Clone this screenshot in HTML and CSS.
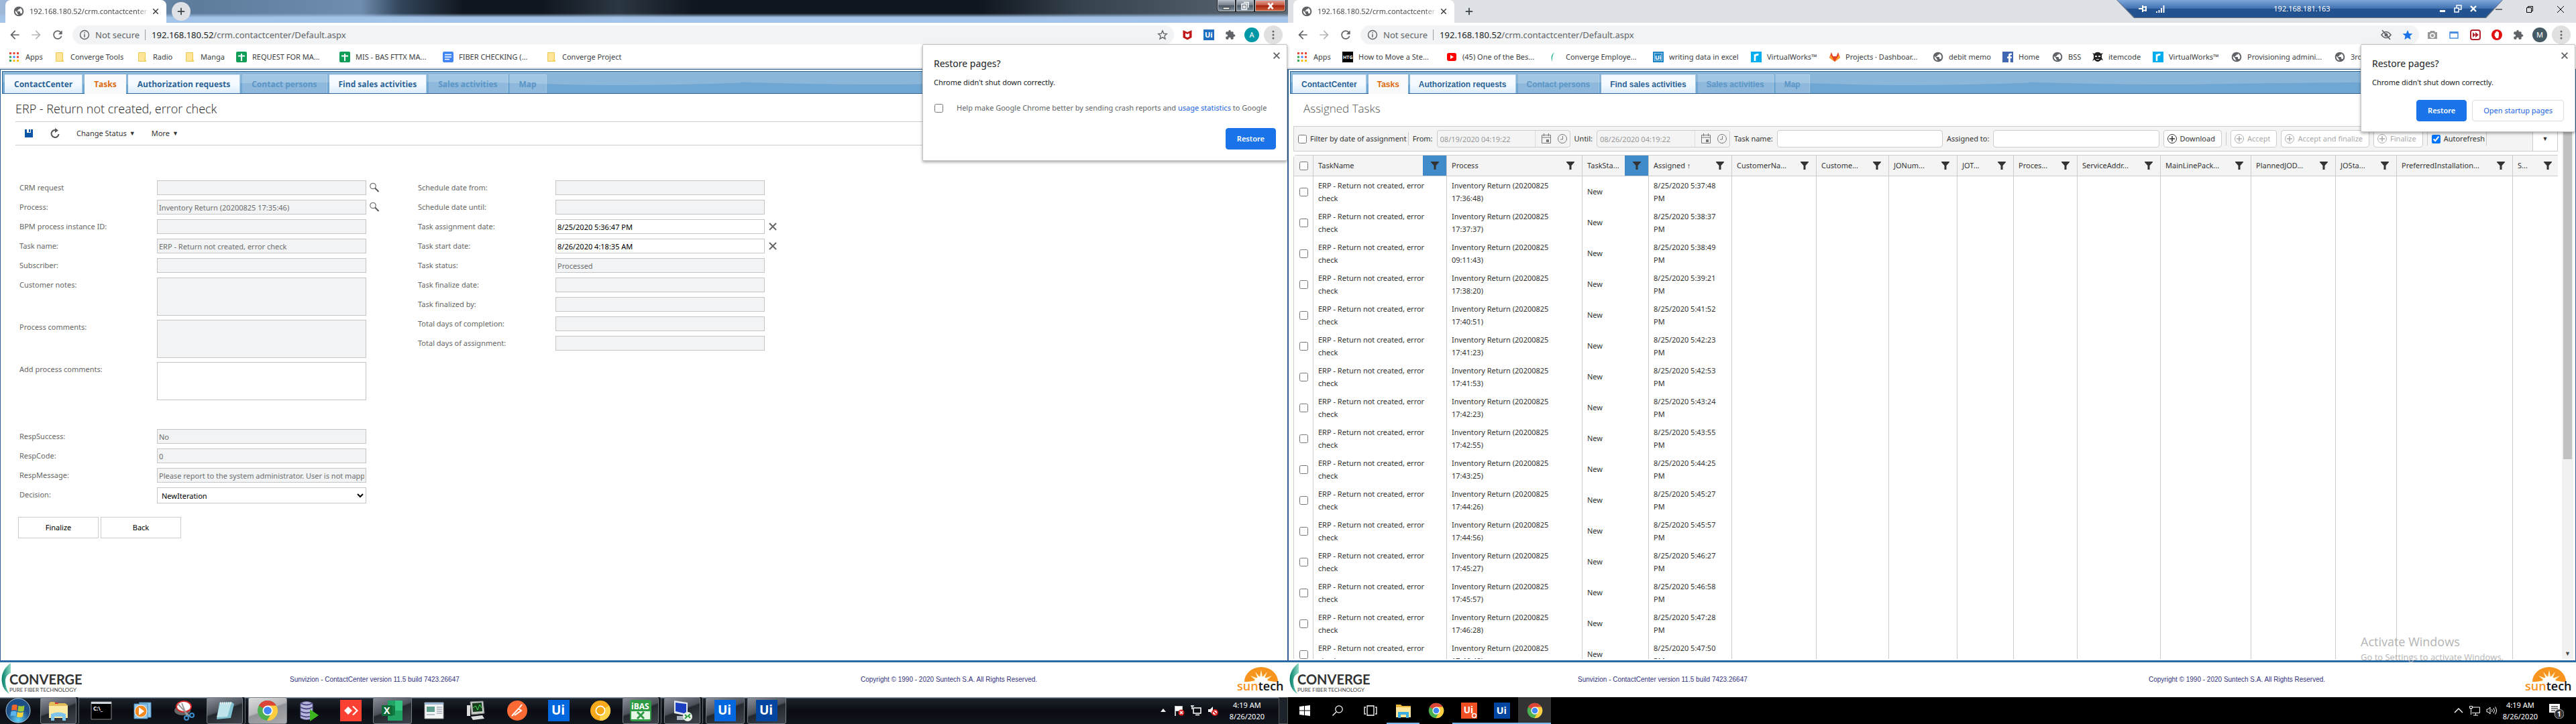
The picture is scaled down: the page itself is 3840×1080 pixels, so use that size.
FILE: index.html
```html
<!DOCTYPE html>
<html lang="en">
<head>
<meta charset="utf-8">
<title>ContactCenter</title>
<link rel="stylesheet" href="styles.css">
</head>
<body>
<svg class="defs" aria-hidden="true">
  <symbol id="globe" viewBox="0 0 24 24"><path fill="#5f6368" d="M12 1a11 11 0 1 0 0 22 11 11 0 0 0 0-22zM4 12c0-.6.1-1.200.2-1.800L9 15v1c0 1.100.9 2 2 2v1.900C7 19.400 4 16.100 4 12zm13.900 5.400c-.3-.8-1-1.400-1.900-1.400h-1v-3c0-.6-.4-1-1-1H8v-2h2c.6 0 1-.4 1-1V7h2c1.100 0 2-.9 2-2v-.4c2.900 1.200 5 4.100 5 7.400 0 2.100-.8 4-2.100 5.400z"/></symbol>
  <symbol id="close" viewBox="0 0 16 16"><path d="M3 3l10 10M13 3L3 13" stroke="currentColor" stroke-width="2" fill="none"/></symbol>
  <symbol id="plus" viewBox="0 0 16 16"><path d="M8 2v12M2 8h12" stroke="currentColor" stroke-width="2" fill="none"/></symbol>
  <symbol id="back" viewBox="0 0 24 24"><path fill="currentColor" d="M20 11H7.830l5.590-5.590L12 4l-8 8 8 8 1.410-1.410L7.830 13H20z"/></symbol>
  <symbol id="forward" viewBox="0 0 24 24"><path fill="currentColor" d="M4 11h12.170l-5.590-5.590L12 4l8 8-8 8-1.410-1.410L16.170 13H4z"/></symbol>
  <symbol id="reload" viewBox="0 0 24 24"><path fill="currentColor" d="M17.650 6.350C16.200 4.900 14.210 4 12 4c-4.420 0-7.990 3.580-7.990 8s3.570 8 7.990 8c3.730 0 6.840-2.550 7.730-6h-2.080c-.82 2.330-3.040 4-5.650 4-3.310 0-6-2.690-6-6s2.690-6 6-6c1.660 0 3.140.69 4.220 1.780L13 11h7V4z"/></symbol>
  <symbol id="info" viewBox="0 0 16 16"><circle cx="8" cy="8" r="6.500" fill="none" stroke="#5f6368" stroke-width="1.400"/><path d="M8 7v4.500M8 4.200v1.600" stroke="#5f6368" stroke-width="1.500"/></symbol>
  <symbol id="puzzle" viewBox="0 0 24 24"><path fill="#5f6368" d="M20.500 11H19V7c0-1.100-.9-2-2-2h-4V3.500a2.500 2.500 0 0 0-5 0V5H4c-1.100 0-2 .9-2 2v3.800h1.500a2.700 2.700 0 0 1 0 5.400H2V20c0 1.100.9 2 2 2h3.800v-1.500a2.700 2.700 0 0 1 5.400 0V22H17c1.100 0 2-.9 2-2v-4h1.500a2.500 2.500 0 0 0 0-5z"/></symbol>
  <symbol id="dots" viewBox="0 0 16 16"><g fill="#5f6368"><circle cx="8" cy="3" r="1.500"/><circle cx="8" cy="8" r="1.500"/><circle cx="8" cy="13" r="1.500"/></g></symbol>
  <symbol id="apps" viewBox="0 0 14 14"><path fill="#ea4335" d="M0 0h3v3H0zM5.500 0h3v3h-3zM11 0h3v3h-3z"/><path fill="#34a853" d="M0 5.500h3v3H0zM0 11h3v3H0z"/><path fill="#4285f4" d="M5.500 5.500h3v3h-3z"/><path fill="#ea4335" d="M11 5.500h3v3h-3z"/><path fill="#fbbc04" d="M5.500 11h3v3h-3zM11 11h3v3h-3z"/></symbol>
  <symbol id="folder" viewBox="0 0 16 16"><path fill="#ffe599" stroke="#ecc94f" d="M2.500 1.500h10V13h1v1.500h-11z"/><path fill="#f7d25c" d="M11 10h2v4h-2z"/></symbol>
  <symbol id="sheet" viewBox="0 0 16 16"><rect width="16" height="16" rx="2" fill="#0f9d58"/><path d="M8 3v11M3 6.500h10" stroke="#fff" stroke-width="2"/></symbol>
  <symbol id="doc" viewBox="0 0 16 16"><rect width="16" height="16" rx="2" fill="#4285f4"/><path d="M3 4.500h10M3 8h10M3 11.500h7" stroke="#fff" stroke-width="1.600"/></symbol>
  <symbol id="rworks" viewBox="0 0 16 16"><path fill="#00aeef" d="M0 0h16v16H0z"/><path d="M6 14V4M6 7c1-2.500 3-3 5.500-2.500" fill="none" stroke="#fff" stroke-width="2.600"/></symbol>
  <symbol id="funnel" viewBox="0 0 14 14"><path fill="#333" d="M1 1h12v1L8.500 7v6h-3V7L1 2z"/></symbol>
  <symbol id="calendar" viewBox="0 0 16 16"><path fill="none" stroke="#777" d="M1.500 2.500h13v12h-13zM1.500 6h13M4.500 0v4M11.500 0v4"/><path fill="#777" d="M8 9h4v4H8z"/></symbol>
  <symbol id="clock" viewBox="0 0 16 16"><circle cx="8" cy="8" r="6.500" fill="none" stroke="#777"/><path d="M8.500 4v5H5" fill="none" stroke="#777"/></symbol>
  <symbol id="addc" viewBox="0 0 16 16"><circle cx="8" cy="8" r="6.500" fill="none" stroke="currentColor"/><path d="M8 4v8M4 8h8" stroke="currentColor" stroke-width="1.600"/></symbol>
  <symbol id="lens" viewBox="0 0 16 16"><circle cx="6" cy="5.500" r="4.200" fill="#fff" stroke="#777" stroke-width="1.300"/><path d="M9 8.500l5.500 5.500" stroke="#555" stroke-width="2"/></symbol>
  <symbol id="chrome" viewBox="0 0 32 32"><circle cx="16" cy="16" r="15" fill="#4caf50"/><path d="M16 16L3 8.500A15 15 0 0 1 29 8.500z" fill="#db4437"/><path d="M3 8.500A15 15 0 0 1 16 1v15z" fill="#db4437"/><path d="M29 8.500A15 15 0 0 1 15 31l7-12-6-10.500z" fill="#ffcd40"/><circle cx="16" cy="16" r="7.500" fill="#fff"/><circle cx="16" cy="16" r="5.800" fill="#4285f4"/></symbol>
  <symbol id="converge" viewBox="0 0 128 50"><defs><linearGradient id="leaf" x2="1"><stop offset="0" stop-color="#00806a"/><stop offset="1" stop-color="#8fd9c4"/></linearGradient></defs><path fill="url(#leaf)" d="M16 0C6 7 1 18 3 29c1 8 5 13 11 17-4-6-6-12-6-19 0-6 3-10 8-12z"/><text x="14" y="32" font-family="Lato, sans-serif" font-size="20" font-weight="700" fill="#333">CONVERGE</text><text x="14" y="43" font-family="Lato, sans-serif" font-size="8" fill="#444">PURE FIBER TECHNOLOGY</text></symbol>
  <symbol id="suntech" viewBox="0 0 74 40"><path fill="#f7941e" d="M12 23a25 22 0 0 1 50 0z"/><path fill="#fff8d8" d="M37 5l2 11 7-8-4 10 11-4-8 7 12 2H17l12-2-8-7 11 4-4-10 7 8z"/><path d="M27 23a10 8 0 0 1 20 0z" fill="#fff"/><text x="1" y="36" font-family="Open Sans, sans-serif" font-weight="600" font-size="18" fill="#f7941e">sun<tspan fill="#111">tech</tspan></text></symbol>
</svg>

<section class="window seven">
  <header class="tabstrip glass">
    <div class="tab"><svg class="i16"><use href="#globe"/></svg><span class="tabname">192.168.180.52/crm.contactcenter</span><button class="plain" aria-label="Close tab"><svg class="i12"><use href="#close"/></svg></button></div>
    <button class="newtab round" aria-label="New tab"><svg class="i14"><use href="#plus"/></svg></button>
    <div class="aero"><button aria-label="Minimize"><svg class="i14" viewBox="0 0 14 14"><path d="M2 9h10v3H2z" fill="#fff" stroke="#333"/></svg></button><button aria-label="Restore"><svg class="i14" viewBox="0 0 14 14"><path d="M5 1.500h7v8M2 4h7.500v8H2zM4.500 7h2.500v2.500H4.500z" fill="none" stroke="#fff" stroke-width="1.500"/></svg></button><button class="red" aria-label="Close"><svg class="i14" viewBox="0 0 16 16"><path d="M4 3l8 10M12 3L4 13" stroke="#fff" stroke-width="3"/></svg></button></div>
  </header>
  <div class="toolbar">
    <button class="plain" aria-label="Back"><svg class="i20"><use href="#back"/></svg></button><button class="plain dim" aria-label="Forward"><svg class="i20"><use href="#forward"/></svg></button><button class="plain" aria-label="Reload"><svg class="i20"><use href="#reload"/></svg></button>
    <div class="omnibox"><svg class="i16"><use href="#info"/></svg><span class="secure">Not secure</span><span class="url" role="textbox"><b>192.168.180.52</b>/crm.contactcenter/Default.aspx</span><button class="plain" aria-label="Bookmark"><svg class="i16" viewBox="0 0 16 16"><path d="M8 1.800l1.800 4.300 4.700.4-3.600 3 1.100 4.600L8 11.600l-4 2.500 1.100-4.600-3.600-3 4.700-.4z" fill="none" stroke="#5f6368" stroke-width="1.300"/></svg></button></div>
    <div class="exts">
      <svg class="i16" viewBox="0 0 16 16"><path fill="#c01818" d="M1.500 1L8 4l6.500-3v11L8 15.500 1.500 12zM5 5.500v5L8 12l3-1.500v-5L8 7z"/></svg>
      <svg class="i16" viewBox="0 0 16 16"><path fill="#1f6fc0" d="M0 0h16v16H0z"/><text x="2" y="12" class="svgt" font-size="11">Ui</text></svg>
      <svg class="i16"><use href="#puzzle"/></svg>
      <span class="avatar teal">A</span>
      <button class="menu" aria-label="Menu"><svg class="i16"><use href="#dots"/></svg></button>
    </div>
  </div>
  <nav class="bookmarks left">
    <a href="#"><svg class="i14"><use href="#apps"/></svg>Apps</a>
    <a href="#"><svg class="i16"><use href="#folder"/></svg>Converge Tools</a>
    <a href="#"><svg class="i16"><use href="#folder"/></svg>Radio</a>
    <a href="#"><svg class="i16"><use href="#folder"/></svg>Manga</a>
    <a href="#"><svg class="i16"><use href="#sheet"/></svg>REQUEST FOR MA...</a>
    <a href="#"><svg class="i16"><use href="#sheet"/></svg>MIS - BAS FTTX MA...</a>
    <a href="#"><svg class="i16"><use href="#doc"/></svg>FIBER CHECKING (...</a>
    <a href="#"><svg class="i16"><use href="#folder"/></svg>Converge Project</a>
  </nav>
  <main class="page">
    <nav class="apptabs"><a href="#">ContactCenter</a><a href="#" class="on">Tasks</a><a href="#">Authorization requests</a><a class="off">Contact persons</a><a href="#">Find sales activities</a><a class="off">Sales activities</a><a class="off">Map</a></nav>
    <h1>ERP - Return not created, error check</h1>
    <div class="actions">
      <button class="plain" aria-label="Save"><svg class="i14" viewBox="0 0 14 14"><path fill="#0b56a4" d="M1 1h12v12H1z"/><path fill="#fff" d="M4 1h6v5H4z"/><path fill="#0b56a4" d="M7 1h2v4H7z"/></svg></button>
      <button class="plain" aria-label="Refresh"><svg class="i16" viewBox="0 0 16 16"><path d="M10 3.300A5.500 5.500 0 1 0 13.500 9" fill="none" stroke="#555" stroke-width="2"/><path d="M8 0l5 3.500L8 7z" fill="#555"/></svg></button>
      <button class="plain">Change Status <i>▼</i></button><button class="plain">More <i>▼</i></button>
    </div>
    <form class="form">
      <div class="col">
        <div class="row"><label for="f1">CRM request</label><input id="f1" disabled><svg class="i16"><use href="#lens"/></svg></div>
        <div class="row"><label for="f2">Process:</label><input id="f2" disabled value="Inventory Return (20200825 17:35:46)"><svg class="i16"><use href="#lens"/></svg></div>
        <div class="row"><label for="f3">BPM process instance ID:</label><input id="f3" disabled></div>
        <div class="row"><label for="f4">Task name:</label><input id="f4" disabled value="ERP - Return not created, error check"></div>
        <div class="row"><label for="f5">Subscriber:</label><input id="f5" disabled></div>
        <div class="row"><label for="f6">Customer notes:</label><textarea id="f6" disabled></textarea></div>
        <div class="row"><label for="f7">Process comments:</label><textarea id="f7" disabled></textarea></div>
        <div class="row"><label for="f8">Add process comments:</label><textarea id="f8"></textarea></div>
        <div class="row spaced"><label for="f9">RespSuccess:</label><input id="f9" disabled value="No"></div>
        <div class="row"><label for="f10">RespCode:</label><input id="f10" disabled value="0"></div>
        <div class="row"><label for="f11">RespMessage:</label><input id="f11" disabled value="Please report to the system administrator. User is not mapped"></div>
        <div class="row"><label for="f12">Decision:</label><select id="f12"><option>NewIteration</option></select></div>
        <div class="buttons"><button type="button">Finalize</button><button type="button">Back</button></div>
      </div>
      <div class="col">
        <div class="row"><label for="g1">Schedule date from:</label><input id="g1" disabled></div>
        <div class="row"><label for="g2">Schedule date until:</label><input id="g2" disabled></div>
        <div class="row"><label for="g3">Task assignment date:</label><input id="g3" value="8/25/2020 5:36:47 PM"><svg class="i16 gray"><use href="#close"/></svg></div>
        <div class="row"><label for="g4">Task start date:</label><input id="g4" value="8/26/2020 4:18:35 AM"><svg class="i16 gray"><use href="#close"/></svg></div>
        <div class="row"><label for="g5">Task status:</label><input id="g5" disabled value="Processed"></div>
        <div class="row"><label for="g6">Task finalize date:</label><input id="g6" disabled></div>
        <div class="row"><label for="g7">Task finalized by:</label><input id="g7" disabled></div>
        <div class="row"><label for="g8">Total days of completion:</label><input id="g8" disabled></div>
        <div class="row"><label for="g9">Total days of assignment:</label><input id="g9" disabled></div>
      </div>
    </form>
  </main>
  <footer class="foot"><svg class="conv"><use href="#converge"/></svg><span>Sunvizion - ContactCenter version 11.5 build 7423.26647</span><span>Copyright © 1990 - 2020 Suntech S.A. All Rights Reserved.</span><svg class="sun"><use href="#suntech"/></svg></footer>
  <div class="taskbar t7">
    <button class="orb" aria-label="Start"><svg class="i38" viewBox="0 0 38 38"><defs><radialGradient id="orb" cy=".9"><stop offset="0" stop-color="#5fd0f5"/><stop offset="1" stop-color="#1d4f86"/></radialGradient></defs><circle cx="19" cy="19" r="18" fill="url(#orb)" stroke="#a8c8e0"/><path fill="#f0662c" d="M10 11q4-2 8 0l-1 8q-4-2-8 0z"/><path fill="#9cc83c" d="M19.500 11.500q4 2 9 0l-1 8q-4 2-9 0z"/><path fill="#5bb4ec" d="M8.500 20.500q4-2 8 0l-1 7q-4-2-8 0z"/><path fill="#fcd23c" d="M18 21q4 2 9 0l-1 7q-4 2-9 0z"/></svg></button>
    <button class="lit stack" aria-label="Explorer"><svg class="i32" viewBox="0 0 32 32"><path fill="#e3bd5a" d="M2 6l2-3h6l2 2h14l4 3v19H2z"/><path fill="#fbe9a4" d="M2 9h28v18H2z"/><path fill="#d33" d="M11 4h5v2h-5z"/><path fill="#7fc4ea" d="M5 21q11-5 22 0v10h-5v-6H10v6H5z"/></svg></button>
    <button aria-label="Command prompt"><svg class="i32" viewBox="0 0 32 32"><path fill="#000" stroke="#888" d="M1 3h30v26H1z"/><path fill="#cfd6de" d="M1 3h30v3H1z"/><text x="4" y="16" class="svgt" font-size="8">C:\_</text></svg></button>
    <button aria-label="Media player"><svg class="i32" viewBox="0 0 32 32"><path fill="#8dc6ea" stroke="#4a8bb8" d="M3 6h20v22H3zM10 4h18v22h-5"/><circle cx="13" cy="17" r="9" fill="#f28a22" stroke="#fff"/><path fill="#fff" d="M10 11l8 6-8 6z"/></svg></button>
    <button aria-label="Snipping tool"><svg class="i32" viewBox="0 0 32 32"><ellipse cx="13" cy="16" rx="12" ry="7" fill="#666"/><ellipse cx="15" cy="10" rx="11" ry="8" fill="#fff" stroke="#d42a2a" stroke-width="2"/><path d="M6 6l18 19M12 5l8 20" stroke="#999" stroke-width="2"/><g fill="none" stroke="#3a8fd0" stroke-width="2"><circle cx="19" cy="27" r="3"/><circle cx="27" cy="23" r="3"/></g></svg></button>
    <button class="lit stack" aria-label="Notepad"><svg class="i32" viewBox="0 0 32 32"><path fill="#7fc0d0" d="M8 4l18-1 4 3-5 21-21 2z"/><path fill="#bfe4ec" d="M9 6l17-1-6 20-16 1z"/><path d="M9 5h18" stroke="#eee" stroke-width="3" stroke-dasharray="2 1"/></svg></button>
    <button class="lit bright" aria-label="Chrome"><svg class="i32"><use href="#chrome"/></svg></button>
    <button aria-label="Database"><svg class="i32" viewBox="0 0 32 32"><path fill="#b9b7dd" stroke="#6b68a0" d="M3 5q9-5 18 0v22q-9 5-18 0z"/><path d="M3 11q9 5 18 0M3 17q9 5 18 0M3 23q9 5 18 0M3 5q9 5 18 0" fill="none" stroke="#4a4780" stroke-width="2"/><path fill="#3cb521" d="M17 14l13 9-13 9z"/></svg></button>
    <button aria-label="AnyDesk"><svg class="i32" viewBox="0 0 32 32"><path fill="#fb4034" d="M0 0h32v32H0z"/><path fill="#fff" d="M12 10l6 6-6 6-6-6zM18 10l2-1 7 7-7 7-2-1 6-6z"/></svg></button>
    <button class="lit" aria-label="Excel"><svg class="i32" viewBox="0 0 32 32"><path fill="#21a366" d="M9 1h22v30H9z"/><path fill="#33c481" d="M20 1h11v15H20z"/><path fill="#107c41" d="M9 9h11v14H9z"/><path fill="#0f6b38" d="M0 8h16v16H0z"/><text x="3" y="21" class="svgt" font-size="14">X</text></svg></button>
    <button aria-label="Program"><svg class="i32" viewBox="0 0 32 32"><path fill="#f4f4f4" stroke="#999" d="M2 4h28v24H2z"/><path fill="#9db8d6" d="M2 4h28v3H2z"/><path fill="#5f9e8f" d="M5 10h12v8H5z"/><path d="M20 11h8M20 14h8M20 17h8M5 22h12M20 20h8" stroke="#7a8aa0"/></svg></button>
    <button aria-label="Monitor"><svg class="i32" viewBox="0 0 32 32"><path fill="#c7ccc7" stroke="#888" d="M8 3l19-1 2 18-19 2z"/><path fill="#173c1b" d="M11 5l14-1 1 13-14 1z"/><path d="M12 12l4-3 3 6 3-8 3 5" fill="none" stroke="#3fe054"/><path fill="#ddd" d="M9 25l17-2 3 5-17 2zM3 8h5v16H3z"/></svg></button>
    <button aria-label="Postman"><svg class="i32" viewBox="0 0 32 32"><circle cx="16" cy="16" r="15" fill="#fb6a35"/><path d="M8 24l10-11 4 3-10 7M19 12l4-5" fill="none" stroke="#fff" stroke-width="2"/></svg></button>
    <button aria-label="UiPath"><svg class="i32" viewBox="0 0 32 32"><path fill="#0067df" d="M0 0h32v32H0z"/><text x="5" y="22" class="svgt" font-size="19">Ui</text></svg></button>
    <button aria-label="Chrome Canary"><svg class="i32" viewBox="0 0 32 32"><circle cx="16" cy="16" r="15" fill="#f7a81b"/><path d="M16 16L29 8.500A15 15 0 0 1 15 31z" fill="#fdd248"/><circle cx="16" cy="16" r="7.500" fill="#fff"/><circle cx="16" cy="16" r="5.800" fill="#f3a712"/></svg></button>
    <button class="lit stack" aria-label="iBAS"><svg class="i32" viewBox="0 0 32 32"><rect width="32" height="32" rx="4" fill="#2f9a44"/><path fill="#e6f5e4" d="M2 17h28v12H2z"/><path d="M11 18l10 10M21 18L11 28" stroke="#2f9a44" stroke-width="3"/><text x="2" y="14" class="svgt" font-size="12">iBAS</text></svg></button>
    <button class="lit stack" aria-label="Remote desktop"><svg class="i32" viewBox="0 0 32 32"><path fill="#dfe6ee" d="M4 1l20 3v20L4 20z"/><path fill="#1c3fc0" d="M6 4l16 2v15L6 17z"/><path fill="#aab4be" d="M8 24h10v6H8z"/><circle cx="24" cy="25" r="7" fill="#e8f0e8"/><path d="M20 22l3 3-3 3M28 21l-3 3 3 3" fill="none" stroke="#2c9b3a" stroke-width="2"/></svg></button>
    <button class="lit" aria-label="UiPath Studio"><svg class="i32" viewBox="0 0 32 32"><path fill="#0067df" d="M0 0h32v32H0z"/><text x="5" y="22" class="svgt" font-size="19">Ui</text></svg></button>
    <button class="lit" aria-label="UiPath Assistant"><svg class="i32" viewBox="0 0 32 32"><path fill="#0046a0" d="M0 0h32v32H0z"/><text x="5" y="22" class="svgt" font-size="19">Ui</text></svg></button>
    <div class="tray">
      <svg class="i14" viewBox="0 0 14 14"><path fill="#eee" d="M3 9l4-5 4 5z"/></svg>
      <svg class="i16" viewBox="0 0 16 16"><path d="M2 1v15M2 2h10v6H2" stroke="#fff" fill="#fff" stroke-width="1.500"/><circle cx="11" cy="11" r="4.500" fill="#d42020"/><path d="M9 9l4 4M13 9l-4 4" stroke="#fff" stroke-width="1.500"/></svg>
      <svg class="i16" viewBox="0 0 16 16"><path d="M4 4h11v8H4zM7 14.500h6M2 1v5M0 1h5" stroke="#fff" fill="none" stroke-width="1.500"/></svg>
      <svg class="i16" viewBox="0 0 16 16"><path fill="#fff" d="M1 6h3l4-4v12l-4-4H1z"/><circle cx="11" cy="11" r="4" fill="#fff" stroke="#d42020" stroke-width="2"/><path d="M8 8l6 6" stroke="#d42020" stroke-width="2"/></svg>
      <div class="time">4:19 AM<br>8/26/2020</div><button class="peek" aria-label="Show desktop"></button>
    </div>
  </div>
  <aside class="dialog wide">
    <button class="plain x" aria-label="Close"><svg class="i14"><use href="#close"/></svg></button>
    <h2>Restore pages?</h2><p>Chrome didn't shut down correctly.</p>
    <label class="help"><input type="checkbox"><span>Help make Google Chrome better by sending crash reports and <a href="#">usage statistics</a> to Google</span></label>
    <div class="dbtns"><button class="primary">Restore</button></div>
  </aside>
</section>

<section class="window ten">
  <header class="tabstrip">
    <div class="tab"><svg class="i16"><use href="#globe"/></svg><span class="tabname">192.168.180.52/crm.contactcenter</span><button class="plain" aria-label="Close tab"><svg class="i12"><use href="#close"/></svg></button></div>
    <button class="newtab" aria-label="New tab"><svg class="i14"><use href="#plus"/></svg></button>
    <div class="winbtns"><button class="plain" aria-label="Minimize"><svg class="i12" viewBox="0 0 12 12"><path d="M1 6h10" stroke="#000"/></svg></button><button class="plain" aria-label="Restore"><svg class="i12" viewBox="0 0 12 12"><path d="M1.500 3.500h7v7h-7zM3.500 3V1.500h7v7H9" fill="none" stroke="#000"/></svg></button><button class="plain" aria-label="Close"><svg class="i12" viewBox="0 0 12 12"><path d="M1 1l10 10M11 1L1 11" stroke="#000"/></svg></button></div>
  </header>
  <div class="toolbar">
    <button class="plain" aria-label="Back"><svg class="i20"><use href="#back"/></svg></button><button class="plain dim" aria-label="Forward"><svg class="i20"><use href="#forward"/></svg></button><button class="plain" aria-label="Reload"><svg class="i20"><use href="#reload"/></svg></button>
    <div class="omnibox"><svg class="i16"><use href="#info"/></svg><span class="secure">Not secure</span><span class="url" role="textbox"><b>192.168.180.52</b>/crm.contactcenter/Default.aspx</span><svg class="i16" viewBox="0 0 16 16"><path d="M1 8q7-9 14 0-7 9-14 0zM2 1l12 14" fill="none" stroke="#5f6368" stroke-width="1.600"/><circle cx="8" cy="8" r="2.500" fill="#5f6368"/></svg><button class="plain" aria-label="Bookmark"><svg class="i16" viewBox="0 0 16 16"><path d="M8 1l2.100 4.900 5.400.4-4.100 3.500 1.300 5.200L8 12.200 3.300 15l1.300-5.200L.5 6.300l5.400-.4z" fill="#1a73e8"/></svg></button></div>
    <div class="exts">
      <svg class="i16" viewBox="0 0 16 16"><path fill="#999" d="M1 4h3l1-2h6l1 2h3v10H1z"/><circle cx="8" cy="9" r="3" fill="#999" stroke="#fff" stroke-width="1.500"/></svg>
      <svg class="i16" viewBox="0 0 16 16"><path d="M2 4h12v9H2z" fill="#fff" stroke="#4a8de0" stroke-width="1.500"/><path fill="#4a8de0" d="M2 3h12v3H2z"/></svg>
      <svg class="i16" viewBox="0 0 16 16"><rect x="1" y="1" width="14" height="14" rx="3" fill="#fff" stroke="#b3202a" stroke-width="2"/><path fill="#b3202a" d="M4 4l4 4-4 4zM8 4l5 4-5 4z"/></svg>
      <svg class="i16" viewBox="0 0 16 16"><circle cx="8" cy="8" r="8" fill="#e01010"/><path fill="#fff" d="M5 5h1.500V3H8V2.500h1.500V4H11v5l-1 4H7L4.500 9z"/></svg>
      <svg class="i16"><use href="#puzzle"/></svg>
      <span class="avatar slate">M</span>
      <button class="menu" aria-label="Menu"><svg class="i16"><use href="#dots"/></svg></button>
    </div>
  </div>
  <nav class="bookmarks right">
    <a href="#"><svg class="i14"><use href="#apps"/></svg>Apps</a>
    <a href="#"><svg class="i16" viewBox="0 0 16 16"><path d="M0 0h16v16H0z"/><text x="1" y="11" class="svgt" font-size="7">HTG</text></svg>How to Move a Ste...</a>
    <a href="#"><svg class="i16" viewBox="0 0 16 16"><rect x="1" y="2" width="14" height="12" rx="3" fill="#f00"/><path fill="#fff" d="M6 5l5 3-5 3z"/></svg>(45) One of the Bes...</a>
    <a href="#"><svg class="i16" viewBox="0 0 16 16"><path fill="#2fb598" d="M7 1C3 4 1 8 4 15c-.5-5 0-9 3-14z"/></svg>Converge Employe...</a>
    <a href="#"><svg class="i16" viewBox="0 0 16 16"><path fill="#fff" stroke="#1d84c6" stroke-width="2" d="M1 1h14v14H1z"/><path fill="#1d84c6" d="M2.500 2.500h11v11h-11z"/><text x="3" y="12" class="svgt" font-size="9">Ui</text></svg>writing data in excel</a>
    <a href="#"><svg class="i16"><use href="#rworks"/></svg>VirtualWorks™</a>
    <a href="#"><svg class="i16" viewBox="0 0 16 16"><path fill="#e24329" d="M3 1l2.500 6h5L13 1l3 8-8 6-8-6z"/><path fill="#fc9d26" d="M0 9l2-4 6 10zM16 9l-2-4-6 10z"/></svg>Projects · Dashboar...</a>
    <a href="#"><svg class="i16"><use href="#globe"/></svg>debit memo</a>
    <a href="#"><svg class="i16" viewBox="0 0 16 16"><path fill="#4267b2" d="M0 0h16v16H0z"/><path fill="#fff" d="M9 16v-6H7V7.500h2V5.500C9 3.500 10 2.500 12 2.500h2V5h-1.300c-.7 0-.9.300-.9.900v1.600H14L13.700 10h-1.900v6z"/></svg>Home</a>
    <a href="#"><svg class="i16"><use href="#globe"/></svg>BSS</a>
    <a href="#"><svg class="i16" viewBox="0 0 16 16"><path fill="#222" d="M0 2l3 1c3-3 7-3 10 0l3-1-2 3v4l2 4-3-1c-3 4-7 4-10 0l-3 2 2-4V5z"/><path fill="#ddd" d="M4 6h3v2H4zM9 6h3v2H9zM6 11h4v1H6z"/></svg>itemcode</a>
    <a href="#"><svg class="i16"><use href="#rworks"/></svg>VirtualWorks™</a>
    <a href="#"><svg class="i16"><use href="#globe"/></svg>Provisioning admini...</a>
    <a href="#"><svg class="i16"><use href="#globe"/></svg>3rd</a>
  </nav>
  <main class="page">
    <nav class="apptabs arial"><a href="#">ContactCenter</a><a href="#" class="on">Tasks</a><a href="#">Authorization requests</a><a class="off">Contact persons</a><a href="#">Find sales activities</a><a class="off">Sales activities</a><a class="off">Map</a></nav>
    <h1 class="pale">Assigned Tasks</h1>
    <div class="scroller">
      <div class="content">
        <div class="filterbar">
          <label class="chk rule"><input type="checkbox">Filter by date of assignment</label>
          <label for="from">From:</label>
          <div class="date"><input id="from" disabled value="08/19/2020 04:19:22"><svg class="i16"><use href="#calendar"/></svg><svg class="i16"><use href="#clock"/></svg></div>
          <label for="until">Until:</label>
          <div class="date"><input id="until" disabled value="08/26/2020 04:19:22"><svg class="i16"><use href="#calendar"/></svg><svg class="i16"><use href="#clock"/></svg></div>
          <label for="tn">Task name:</label><input class="grow" id="tn">
          <label for="at">Assigned to:</label><input class="grow" id="at">
          <button><svg class="i16"><use href="#addc"/></svg>Download</button><span class="sep"></span>
          <button disabled><svg class="i16"><use href="#addc"/></svg>Accept</button>
          <button disabled><svg class="i16"><use href="#addc"/></svg>Accept and finalize</button>
          <button disabled><svg class="i16"><use href="#addc"/></svg>Finalize</button><span class="sep"></span>
          <label class="chk rule"><input type="checkbox" checked>Autorefresh</label>
          <button class="more" aria-label="More">▼</button>
        </div>
        <table class="grid">
          <colgroup><col class="c0"><col class="c1"><col class="c2"><col class="c3"><col class="c4"><col class="c5"><col class="c6"><col class="c7"><col class="c8"><col class="c9"><col class="c10"><col class="c11"><col class="c12"><col class="c13"><col class="c14"><col class="c15"></colgroup>
          <thead><tr><th class="pick"><input type="checkbox" aria-label="Select all"></th>
          <th><div>TaskName<span class="f act"><svg class="i14"><use href="#funnel"/></svg></span></div></th>
          <th><div>Process<span class="f"><svg class="i14"><use href="#funnel"/></svg></span></div></th>
          <th><div>TaskSta...<span class="f act"><svg class="i14"><use href="#funnel"/></svg></span></div></th>
          <th><div>Assigned ↑<span class="f"><svg class="i14"><use href="#funnel"/></svg></span></div></th>
          <th><div>CustomerNa...<span class="f"><svg class="i14"><use href="#funnel"/></svg></span></div></th>
          <th><div>Custome...<span class="f"><svg class="i14"><use href="#funnel"/></svg></span></div></th>
          <th><div>JONum...<span class="f"><svg class="i14"><use href="#funnel"/></svg></span></div></th>
          <th><div>JOT...<span class="f"><svg class="i14"><use href="#funnel"/></svg></span></div></th>
          <th><div>Proces...<span class="f"><svg class="i14"><use href="#funnel"/></svg></span></div></th>
          <th><div>ServiceAddr...<span class="f"><svg class="i14"><use href="#funnel"/></svg></span></div></th>
          <th><div>MainLinePack...<span class="f"><svg class="i14"><use href="#funnel"/></svg></span></div></th>
          <th><div>PlannedJOD...<span class="f"><svg class="i14"><use href="#funnel"/></svg></span></div></th>
          <th><div>JOSta...<span class="f"><svg class="i14"><use href="#funnel"/></svg></span></div></th>
          <th><div>PreferredInstallation...<span class="f"><svg class="i14"><use href="#funnel"/></svg></span></div></th>
          <th><div>S...<span class="f"><svg class="i14"><use href="#funnel"/></svg></span></div></th></tr></thead>
          <tbody>
          <tr><td class="pick"><input type="checkbox" aria-label="Select"></td><td>ERP - Return not created, error<br>check</td><td>Inventory Return (20200825<br>17:36:48)</td><td>New</td><td>8/25/2020 5:37:48<br>PM</td><td></td><td></td><td></td><td></td><td></td><td></td><td></td><td></td><td></td><td></td><td></td></tr>
          <tr><td class="pick"><input type="checkbox" aria-label="Select"></td><td>ERP - Return not created, error<br>check</td><td>Inventory Return (20200825<br>17:37:37)</td><td>New</td><td>8/25/2020 5:38:37<br>PM</td><td></td><td></td><td></td><td></td><td></td><td></td><td></td><td></td><td></td><td></td><td></td></tr>
          <tr><td class="pick"><input type="checkbox" aria-label="Select"></td><td>ERP - Return not created, error<br>check</td><td>Inventory Return (20200825<br>09:11:43)</td><td>New</td><td>8/25/2020 5:38:49<br>PM</td><td></td><td></td><td></td><td></td><td></td><td></td><td></td><td></td><td></td><td></td><td></td></tr>
          <tr><td class="pick"><input type="checkbox" aria-label="Select"></td><td>ERP - Return not created, error<br>check</td><td>Inventory Return (20200825<br>17:38:20)</td><td>New</td><td>8/25/2020 5:39:21<br>PM</td><td></td><td></td><td></td><td></td><td></td><td></td><td></td><td></td><td></td><td></td><td></td></tr>
          <tr><td class="pick"><input type="checkbox" aria-label="Select"></td><td>ERP - Return not created, error<br>check</td><td>Inventory Return (20200825<br>17:40:51)</td><td>New</td><td>8/25/2020 5:41:52<br>PM</td><td></td><td></td><td></td><td></td><td></td><td></td><td></td><td></td><td></td><td></td><td></td></tr>
          <tr><td class="pick"><input type="checkbox" aria-label="Select"></td><td>ERP - Return not created, error<br>check</td><td>Inventory Return (20200825<br>17:41:23)</td><td>New</td><td>8/25/2020 5:42:23<br>PM</td><td></td><td></td><td></td><td></td><td></td><td></td><td></td><td></td><td></td><td></td><td></td></tr>
          <tr><td class="pick"><input type="checkbox" aria-label="Select"></td><td>ERP - Return not created, error<br>check</td><td>Inventory Return (20200825<br>17:41:53)</td><td>New</td><td>8/25/2020 5:42:53<br>PM</td><td></td><td></td><td></td><td></td><td></td><td></td><td></td><td></td><td></td><td></td><td></td></tr>
          <tr><td class="pick"><input type="checkbox" aria-label="Select"></td><td>ERP - Return not created, error<br>check</td><td>Inventory Return (20200825<br>17:42:23)</td><td>New</td><td>8/25/2020 5:43:24<br>PM</td><td></td><td></td><td></td><td></td><td></td><td></td><td></td><td></td><td></td><td></td><td></td></tr>
          <tr><td class="pick"><input type="checkbox" aria-label="Select"></td><td>ERP - Return not created, error<br>check</td><td>Inventory Return (20200825<br>17:42:55)</td><td>New</td><td>8/25/2020 5:43:55<br>PM</td><td></td><td></td><td></td><td></td><td></td><td></td><td></td><td></td><td></td><td></td><td></td></tr>
          <tr><td class="pick"><input type="checkbox" aria-label="Select"></td><td>ERP - Return not created, error<br>check</td><td>Inventory Return (20200825<br>17:43:25)</td><td>New</td><td>8/25/2020 5:44:25<br>PM</td><td></td><td></td><td></td><td></td><td></td><td></td><td></td><td></td><td></td><td></td><td></td></tr>
          <tr><td class="pick"><input type="checkbox" aria-label="Select"></td><td>ERP - Return not created, error<br>check</td><td>Inventory Return (20200825<br>17:44:26)</td><td>New</td><td>8/25/2020 5:45:27<br>PM</td><td></td><td></td><td></td><td></td><td></td><td></td><td></td><td></td><td></td><td></td><td></td></tr>
          <tr><td class="pick"><input type="checkbox" aria-label="Select"></td><td>ERP - Return not created, error<br>check</td><td>Inventory Return (20200825<br>17:44:56)</td><td>New</td><td>8/25/2020 5:45:57<br>PM</td><td></td><td></td><td></td><td></td><td></td><td></td><td></td><td></td><td></td><td></td><td></td></tr>
          <tr><td class="pick"><input type="checkbox" aria-label="Select"></td><td>ERP - Return not created, error<br>check</td><td>Inventory Return (20200825<br>17:45:27)</td><td>New</td><td>8/25/2020 5:46:27<br>PM</td><td></td><td></td><td></td><td></td><td></td><td></td><td></td><td></td><td></td><td></td><td></td></tr>
          <tr><td class="pick"><input type="checkbox" aria-label="Select"></td><td>ERP - Return not created, error<br>check</td><td>Inventory Return (20200825<br>17:45:57)</td><td>New</td><td>8/25/2020 5:46:58<br>PM</td><td></td><td></td><td></td><td></td><td></td><td></td><td></td><td></td><td></td><td></td><td></td></tr>
          <tr><td class="pick"><input type="checkbox" aria-label="Select"></td><td>ERP - Return not created, error<br>check</td><td>Inventory Return (20200825<br>17:46:28)</td><td>New</td><td>8/25/2020 5:47:28<br>PM</td><td></td><td></td><td></td><td></td><td></td><td></td><td></td><td></td><td></td><td></td><td></td></tr>
          <tr><td class="pick"><input type="checkbox" aria-label="Select"></td><td>ERP - Return not created, error<br>check</td><td>Inventory Return (20200825<br>17:46:48)</td><td>New</td><td>8/25/2020 5:47:50<br>PM</td><td></td><td></td><td></td><td></td><td></td><td></td><td></td><td></td><td></td><td></td><td></td></tr>
          </tbody>
        </table>
      </div>
      <div class="scrollbar"><div class="thumb"></div><span>▼</span></div>
    </div>
  </main>
  <footer class="foot"><svg class="conv"><use href="#converge"/></svg><span>Sunvizion - ContactCenter version 11.5 build 7423.26647</span><span>Copyright © 1990 - 2020 Suntech S.A. All Rights Reserved.</span><svg class="sun"><use href="#suntech"/></svg></footer>
  <div class="taskbar t10">
    <button aria-label="Start"><svg class="i16" viewBox="0 0 16 16"><path fill="#fff" d="M0 2l7-1v6.500H0zM8 1l8-1v7.500H8zM0 8.500h7V15l-7-1zM8 8.500h8V16l-8-1z"/></svg></button>
    <button aria-label="Search"><svg class="i16" viewBox="0 0 16 16"><circle cx="10" cy="6" r="5.200" fill="none" stroke="#fff" stroke-width="1.200"/><path d="M6 10l-5.500 5.500" stroke="#fff" stroke-width="1.300"/></svg></button>
    <button aria-label="Task view"><svg class="i20" viewBox="0 0 20 16"><path d="M5 1h10v14H5zM3 3H1v10h2M17 3h2v10h-2" fill="none" stroke="#fff" stroke-width="1.300"/></svg></button>
    <button class="open" aria-label="Files"><svg class="i24" viewBox="0 0 24 24"><path fill="#e8b73a" d="M1 3h7l2 2h13v17H1z"/><path fill="#ffe69a" d="M1 7h22v15H1z"/><path fill="#3aaee0" d="M4 14h16v9h-4v-5H8v5H4z"/></svg></button>
    <button aria-label="Chrome"><svg class="i24"><use href="#chrome"/></svg></button>
    <button class="open" aria-label="UiPath Robot"><svg class="i24" viewBox="0 0 32 32"><path fill="#f04e23" d="M0 0h32v32H0z"/><text x="5" y="21" class="svgt" font-size="18">Ui</text><circle cx="26" cy="26" r="4" fill="none" stroke="#fff" stroke-width="2"/></svg></button>
    <button class="open" aria-label="UiPath"><svg class="i24" viewBox="0 0 32 32"><path fill="#0046a0" d="M0 0h32v32H0z"/><text x="5" y="22" class="svgt" font-size="19">Ui</text></svg></button>
    <button class="open active" aria-label="Chrome window"><svg class="i24"><use href="#chrome"/></svg></button>
    <div class="tray">
      <svg class="i14" viewBox="0 0 14 14"><path d="M1 10l6-6 6 6" fill="none" stroke="#fff" stroke-width="1.400"/></svg>
      <svg class="i16" viewBox="0 0 16 16"><path d="M4 3h11.500v8.500H4M9.500 12v3M6 15h7M.5 1.500h4v3h-4zM2.500 5v9" fill="none" stroke="#fff"/></svg>
      <svg class="i16" viewBox="0 0 16 16"><path d="M1 6h2l3-3v10l-3-3H1zM8.500 6q1.500 2 0 4M11 4q3 4 0 8M13.500 2.500q4 5.500 0 11" fill="none" stroke="#fff"/></svg>
      <div class="time">4:19 AM<br>8/26/2020</div>
      <svg class="i24 note" viewBox="0 0 24 24"><path fill="#fff" d="M2 2h16v13h-5l-3 4v-4H2z"/><path d="M5 6h10M5 9h10M5 12h6" stroke="#000"/><circle cx="17" cy="17" r="7" fill="#333" stroke="#aaa"/><text x="14" y="21" class="svgt" font-size="10">1</text></svg>
    </div>
  </div>
  <div class="remote"><div class="rbar"><svg class="i16" viewBox="0 0 16 16"><path d="M1 8h6M7 3v10M7 5.500h5v5H7M12 4v8" stroke="#fff" stroke-width="2" fill="none"/></svg><svg class="i14" viewBox="0 0 14 14"><path d="M1 13v-2M4.500 13V9M8 13V6M11.500 13V2" stroke="#fff" stroke-width="2"/></svg><span>192.168.181.163</span><svg class="i12" viewBox="0 0 12 12"><path fill="#fff" d="M2 8h8v3H2z"/></svg><svg class="i12" viewBox="0 0 12 12"><path d="M1 5h6v6H1zM4 4V1h7v6H8" fill="none" stroke="#fff" stroke-width="1.500"/></svg><svg class="i12" viewBox="0 0 12 12"><path d="M2 2l8 8M10 2l-8 8" stroke="#fff" stroke-width="2.400"/></svg></div></div>
  <aside class="dialog narrow">
    <button class="plain x" aria-label="Close"><svg class="i14"><use href="#close"/></svg></button>
    <h2>Restore pages?</h2><p>Chrome didn't shut down correctly.</p>
    <div class="dbtns"><button class="primary">Restore</button><button>Open startup pages</button></div>
  </aside>
  <div class="activate"><strong>Activate Windows</strong><span>Go to Settings to activate Windows.</span></div>
</section>
</body>
</html>
```

FILE: styles.css
```css
* { box-sizing: border-box; }
body { margin: 0; display: flex; height: 100vh; overflow: hidden; background: #fff; font: 11px/16px "Noto Sans", "Open Sans", sans-serif; color: #333; }
button, input, select, textarea { font: inherit; color: inherit; margin: 0; }
a { color: inherit; text-decoration: none; }
svg { display: block; flex: none; }
.defs { position: absolute; width: 0; height: 0; }
.svgt { font-family: "Open Sans", sans-serif; font-weight: 700; fill: #fff; }
.i12 { width: 12px; height: 12px; }
.i14 { width: 14px; height: 14px; }
.i16 { width: 16px; height: 16px; }
.i20 { width: 20px; height: 20px; }
.i24 { width: 24px; height: 24px; }
.i32 { width: 32px; height: 32px; }
.i38 { width: 38px; height: 38px; }
.gray { color: #666; }
.plain { border: 0; background: none; padding: 0; display: flex; align-items: center; }

.window { position: relative; flex: 1; min-width: 0; display: flex; flex-direction: column; height: 100%; }

/* browser frame */
.tabstrip { height: 34px; display: flex; background: #dee1e6; padding-left: 8px; flex: none; }
.glass { background: linear-gradient(180deg, rgba(165,196,234,0) 20px, #a5c4ea 26px), linear-gradient(90deg, #9fb9d8, #5d7c9c 15%, #6f8dae 28%, #33465c 31%, #10161e 36%, #10161e 42%, #2b3743 48%, #10161e 54%, #10161e 76%, #36434f 84%, #5d6a76); }
.tab { width: 240px; background: #fff; border-radius: 8px 8px 0 0; display: flex; align-items: center; padding: 0 10px 0 12px; color: #3c4043; }
.tabname { flex: 1; margin: 0 4px 0 8px; white-space: nowrap; overflow: hidden; font-family: "Open Sans", sans-serif; -webkit-mask-image: linear-gradient(90deg, #000 90%, transparent); mask-image: linear-gradient(90deg, #000 90%, transparent); }
.newtab { width: 28px; height: 28px; margin: 3px 0 0 8px; padding: 0; border: 0; border-radius: 50%; background: none; display: flex; align-items: center; justify-content: center; color: #3c4043; }
.newtab.round { background: #dee1e6; }
.aero { margin: 0 3px 0 auto; display: flex; height: 18px; }
.aero button { width: 28px; height: 18px; padding: 0; border: 1px solid #222; border-top: 0; background: linear-gradient(#b8c0c8, #6e7884 50%, #4c5866 50%, #8a97a5); display: flex; align-items: center; justify-content: center; box-shadow: inset 0 0 0 1px #b9c2ca; }
.aero button:first-child { border-radius: 0 0 0 5px; }
.aero .red { width: 47px; border-radius: 0 0 5px 0; background: linear-gradient(#e2a596, #c4513a 50%, #a92510 50%, #d26a45); }
.winbtns { margin-left: auto; display: flex; gap: 34px; padding: 8px 17px 0 0; align-items: flex-start; }
.toolbar { height: 35px; flex: none; display: flex; align-items: center; padding: 0 8px 0 12px; gap: 12px; color: #5f6368; }
.dim { color: #b4b6b9; }
.omnibox { flex: 1; height: 28px; border-radius: 14px; background: #f1f3f4; display: flex; align-items: center; padding: 0 9px 0 10px; font-size: 13px; gap: 16px; }
.secure { margin-left: -8px; padding-right: 8px; border-right: 1px solid #9aa0a6; }
.url { flex: 1; margin-left: -7px; }
.url b { font-weight: 400; color: #202124; }
.exts { display: flex; align-items: center; gap: 16px; }
.avatar { width: 22px; height: 22px; margin: 0 -3px; border-radius: 50%; color: #fff; text-align: center; line-height: 22px; }
.teal { background: #0097a7; }
.slate { background: #455a64; }
.menu { width: 28px; height: 28px; margin-left: -6px; border: 0; border-radius: 50%; background: #e0e0e0; padding: 6px; }
.bookmarks { height: 34px; flex: none; display: grid; align-items: center; padding-left: 14px; border-bottom: 2px solid #d5d8dc; color: #3c4043; white-space: nowrap; overflow: hidden; }
.bookmarks a { display: flex; align-items: center; gap: 8px; }
.bookmarks a:first-child { gap: 10px; }
.bookmarks.left { grid-template-columns: 67px 123px 71px 77px 154px 154px 154px 1fr; }
.bookmarks.right { grid-template-columns: 67px 155px 154px 154px 146px 117px 154px 104px 74px 60px 90px 117px 154px 1fr; }

/* application page */
.page { flex: 1; min-height: 0; display: flex; flex-direction: column; border: 1px solid #2f6396; border-bottom: 0; padding: 2px 0 0 2px; background: #fff; }
.apptabs { flex: none; height: 34px; display: flex; align-items: stretch; gap: 3px; padding: 4px 0 0 3px; border: 1px solid #2f6396; border-right: 0; font-family: "Open Sans", sans-serif; font-weight: 700; font-size: 12px; color: #2b6397; background: url("data:image/svg+xml,%3Csvg xmlns='http://www.w3.org/2000/svg' viewBox='0 0 1100 33' preserveAspectRatio='none'%3E%3Cpath fill='%238ab6da' d='M0 0h1100v33H0z'/%3E%3Cpath fill='%236fa6d2' d='M0 16q140 5 270 3t280-3q140-1 270 3t280-2v16H0z'/%3E%3C/svg%3E") 0 0 / 1100px 100%; }
.apptabs a { padding: 0 14px; display: flex; align-items: center; background: linear-gradient(#f4faff 50%, #dcedfb); border-top: 1px solid #cfe3f3; border-right: 1px solid #a9cbe6; }
.apptabs a.on { background: #f8fafb; color: #dd6b10; margin-bottom: -1px; border: 0; }
.apptabs a.off { background: rgba(255,255,255,.22); color: #5b96c6; border-color: rgba(255,255,255,.2); }
.apptabs.arial { font-family: "Liberation Sans", Arial, sans-serif; }
.apptabs.arial a { padding: 0 13px; }
h1 { flex: none; margin: 0 22px 0 20px; height: 42px; line-height: 44px; font-family: "Open Sans", sans-serif; font-size: 18px; font-weight: 300; color: #222; border-bottom: 1px solid #ccc; }
h1.pale { font-size: 17px; color: #555; border: 0; height: 48px; }
.actions { flex: none; height: 35px; margin: 0 22px 0 20px; padding-left: 13px; border-bottom: 1px solid #ccc; display: flex; align-items: center; gap: 24px; }
.actions i { font-style: normal; font-size: 9px; margin-left: 4px; }
.form { display: grid; grid-template-columns: 594px 594px; padding: 52px 0 0 26px; color: #666; }
.row { display: grid; grid-template-columns: 205px 312px 16px; margin-bottom: 7px; align-items: start; }
.row svg { height: 16px; margin: 3px 0 0 4px; }
.row label { line-height: 22px; }
.row input { height: 22px; border: 1px solid #c6c6c6; padding: 0 2px; background: #fff; color: #000; width: 312px; }
.row input:disabled, .row textarea:disabled { background: #f1f3f5; color: #6d6d6d; }
.row textarea { height: 57px; border: 1px solid #c6c6c6; background: #fff; resize: none; margin-bottom: -1px; }
.row.spaced { margin-top: 44px; }
.row select { height: 24px; border: 1px solid #c6c6c6; background: #fff; color: #000; padding: 0 2px; }
.buttons { display: flex; gap: 3px; padding-top: 13px; margin-left: -2px; }
.buttons button { width: 120px; height: 32px; border: 1px solid #ccc; background: #fff; color: #000; }

/* task list */
.scroller { flex: 1; min-height: 0; display: flex; padding-bottom: 2px; }
.content { flex: 1; min-width: 0; overflow: hidden; padding-left: 5px; }
.filterbar { height: 38px; background: #f4f4f4; border: 1px solid #ccc; display: flex; align-items: center; gap: 6px; padding-left: 6px; white-space: nowrap; }
.chk { display: flex; align-items: center; gap: 5px; }
.chk input, .pick input { width: 13px; height: 13px; }
.rule { border-right: 1px solid #ccc; height: 20px; padding-right: 2px; }
.date { width: 199px; height: 26px; border: 1px solid #ccc; border-radius: 4px; display: flex; align-items: center; gap: 8px; }
.date input { width: 152px; height: 24px; border: 0; border-right: 1px solid #ddd; background: none; padding: 0 4px; color: #999; min-width: 0; }
.date svg:last-child { margin-right: 3px; }
.grow { flex: 1; min-width: 40px; height: 26px; border: 1px solid #ccc; border-radius: 4px; background: #fff; }
.filterbar button { height: 26px; border: 1px solid #ccc; border-radius: 4px; background: #fff; display: flex; align-items: center; gap: 4px; padding: 0 9px 0 4px; color: #333; }
.filterbar button:disabled { color: #aaa; }
.sep { width: 1px; height: 20px; background: #ccc; }
.filterbar .more { margin-left: 62px; width: 37px; height: 36px; border: 0; border-left: 1px solid #ccc; border-radius: 0; padding: 0; justify-content: center; font-size: 9px; }
.grid { width: 100%; table-layout: fixed; border-collapse: separate; border-spacing: 0; border: 1px solid #ccc; border-radius: 4px 4px 0 0; margin-top: 5px; white-space: nowrap; }
.c0 { width: 29px; } .c1 { width: 199px; } .c2 { width: 202px; } .c3 { width: 99px; } .c4 { width: 124px; } .c5 { width: 126px; } .c6 { width: 108px; } .c7 { width: 102px; } .c8 { width: 84px; } .c9 { width: 95px; } .c10 { width: 124px; } .c11 { width: 135px; } .c12 { width: 126px; } .c13 { width: 91px; } .c14 { width: 173px; } .c15 { width: 69px; }
.grid th { height: 31px; padding: 0; background: #f4f4f4; font-weight: 400; text-align: left; border-bottom: 1px solid #ccc; border-right: 1px solid #ccc; }
.grid th div { display: flex; align-items: center; justify-content: space-between; height: 30px; padding-left: 7px; overflow: hidden; }
.f { width: 35px; height: 30px; flex: none; display: flex; align-items: center; justify-content: center; }
.f.act { background: #428bca; }
.grid td { height: 46px; padding: 0 7px 1px; line-height: 19px; border-right: 1px solid #ccc; overflow: hidden; }
.grid tr > :last-child { border-right: 0; }
.grid .pick { padding: 0; text-align: center; }
.pick input { display: block; margin: 0 auto; }
.scrollbar { width: 17px; flex: none; margin: 0 3px 0 6px; background: #f1f1f1; display: flex; flex-direction: column; align-items: center; justify-content: space-between; font-size: 9px; color: #444; }
.thumb { width: 13px; height: 62%; margin-top: 4px; background: #c1c1c1; }

.foot { flex: none; height: 55px; border-top: 3px solid #2b6aa3; display: grid; grid-template-columns: 432px 851px 1fr auto; align-items: center; padding-right: 3px; color: #33337f; font-family: "Liberation Sans", Arial, sans-serif; font-size: 10px; background: #fff; }
.conv { width: 128px; height: 50px; }
.sun { width: 74px; height: 40px; }

/* desktop taskbars */
.taskbar { height: 40px; flex: none; display: flex; align-items: center; color: #fff; }
.taskbar > button { border: 0; background: none; padding: 0; display: flex; align-items: center; justify-content: center; height: 100%; }
.t7 { background: linear-gradient(#8a97a5 1px, #1d232c 2px, #0a0d13 20px, #11151c); padding-left: 8px; }
.t7 > button { width: 58px; margin-right: 4px; }
.t7 > .orb { width: 38px; margin-right: 14px; }
.t7 .lit { border: 1px solid #777d85; border-radius: 3px; background: linear-gradient(160deg, #8b9098, #4c5159 45%, #23272e 50%, #3f444c); }
.t7 .bright { background: linear-gradient(160deg, #dcdcdc, #b5b7ba 45%, #8f9296 50%, #a9abae); }
.t7 .stack { width: 54px; margin-right: 8px; box-shadow: 3px 0 #11151c, 4px 0 #6c7178; }
.tray { margin-left: auto; display: flex; align-items: center; gap: 9px; height: 100%; }
.time { text-align: center; line-height: 17px; }
.t7 .time { margin: 0 12px 0 8px; }
.peek { width: 14px; height: 40px; border: 1px solid #555; background: #1d232b; }
.t10 { background: #000; }
.t10 > button { width: 49px; }
.t10 .open { box-shadow: inset 0 -2px #76b9ed; }
.t10 .active { background: #333; }
.t10 .note { margin: 0 18px 0 6px; }

/* overlays */
.dialog { position: absolute; top: 66px; right: 1px; background: #fff; border: 1px solid #c4c4c4; border-radius: 2px; box-shadow: 0 2px 4px rgba(0,0,0,.35); padding: 18px 16px 15px; color: #202124; }
.wide { width: 544px; height: 174px; }
.narrow { width: 320px; height: 131px; }
.dialog h2 { margin: 0; font-size: 14px; line-height: 20px; font-weight: 400; }
.dialog p { margin: 10px 0 0; line-height: 16px; }
.dialog .x { position: absolute; top: 9px; right: 8px; color: #5f6368; }
.help { display: flex; align-items: center; gap: 20px; margin-top: 20px; line-height: 20px; color: #5f6368; white-space: nowrap; }
.help input { width: 13px; height: 13px; margin-left: 1px; }
.help a { color: #1a62e0; }
.dbtns { display: flex; justify-content: flex-end; gap: 8px; margin-top: 18px; }
.wide .dbtns { margin-top: 20px; }
.dbtns button { height: 32px; padding: 0 16px; border: 1px solid #dadce0; border-radius: 4px; background: #fff; color: #1a62e0; }
.dbtns .primary { background: #1a73e8; border-color: #1a73e8; color: #fff; font-weight: 600; }
.remote { position: absolute; top: 0; right: 109px; width: 576px; height: 27px; background: #6b7280; clip-path: polygon(0 0, 100% 0, 551px 100%, 26px 100%); }
.rbar { height: 26px; padding: 0 38px 0 32px; display: flex; align-items: center; gap: 11px; color: #fff; background: linear-gradient(#7fa8dc, #3f6fae 50%, #22528f 50%, #22528f); clip-path: polygon(1px 0, 575px 0, 550px 100%, 27px 100%); }
.rbar span { flex: 1; text-align: center; }
.activate { position: absolute; top: calc(100% - 136px); right: 85px; width: 236px; display: flex; flex-direction: column; color: #b4b4b4; white-space: nowrap; pointer-events: none; font-family: "Open Sans", sans-serif; }
.activate strong { font-weight: 400; font-size: 18px; line-height: 26px; }
.activate span { font-size: 13px; line-height: 20px; }
```
